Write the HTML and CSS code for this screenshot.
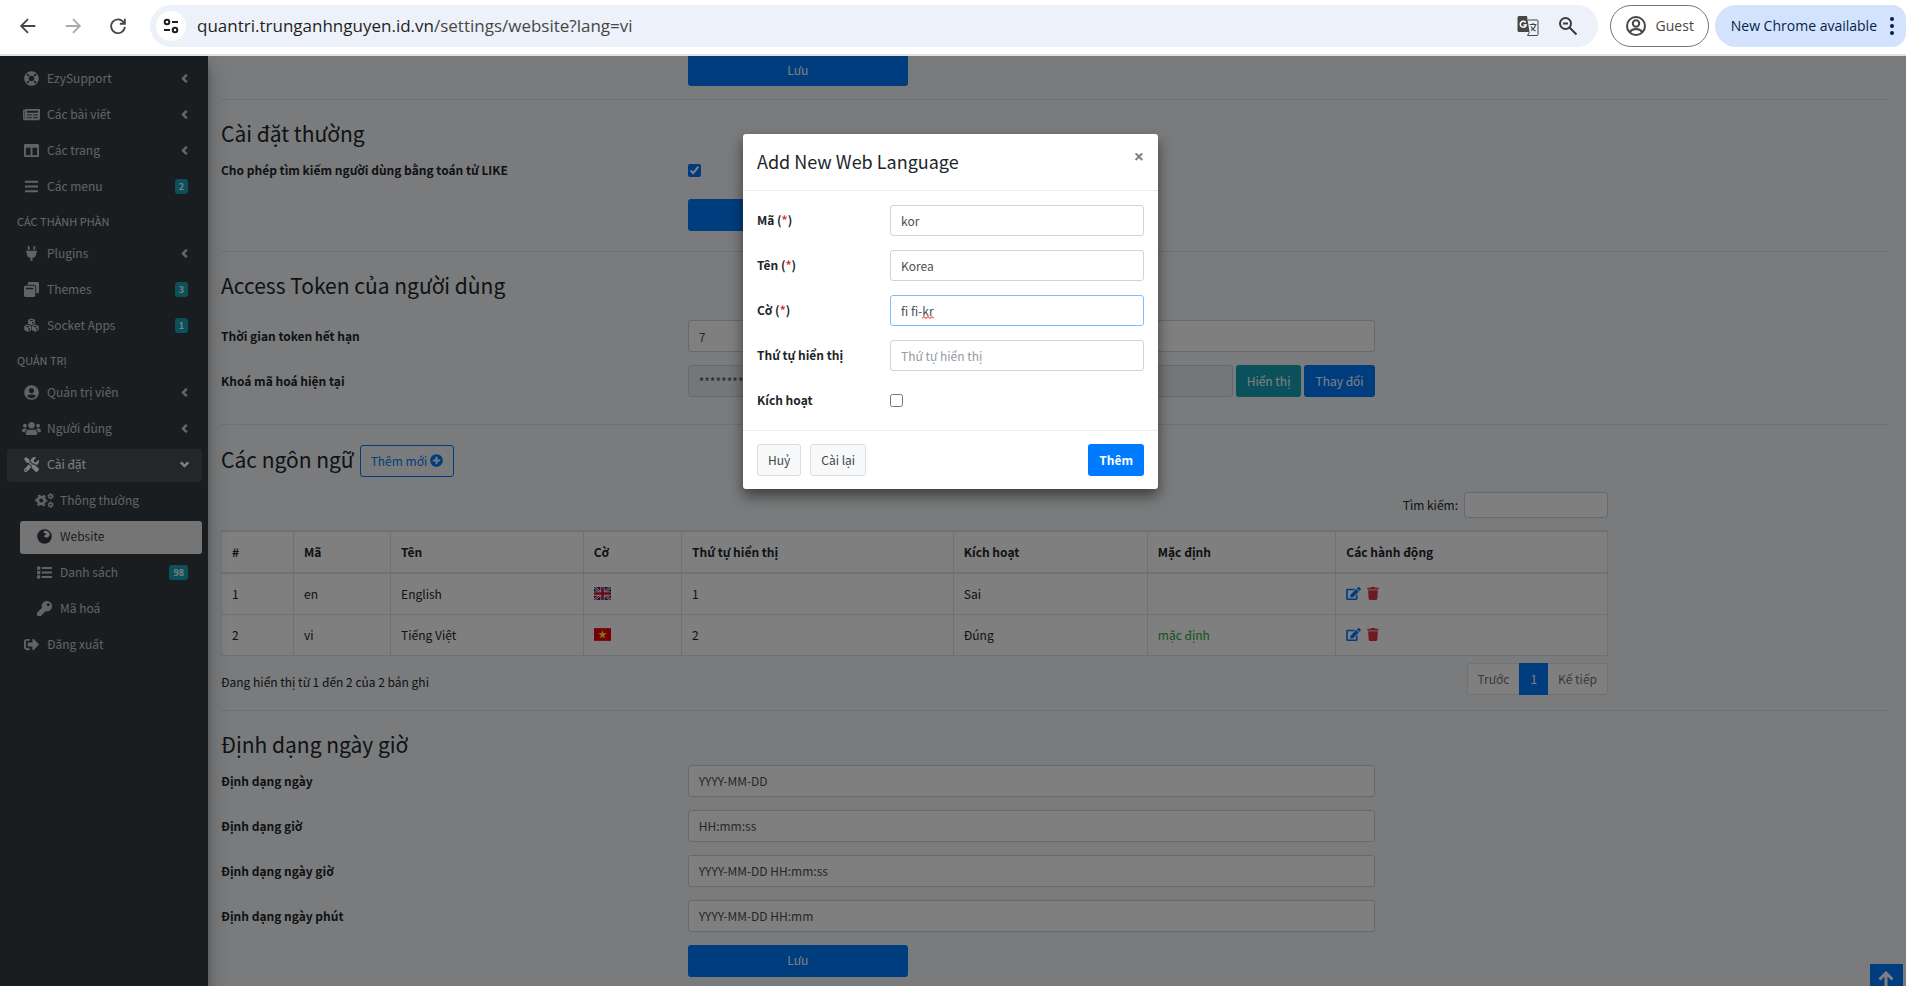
FILE: index.html
```html
<!DOCTYPE html>
<html lang="vi">
<head>
    <meta charset="UTF-8">
    <meta name="viewport" content="width=device-width, initial-scale=1.0">
    <title>Website settings</title>
    <link rel="stylesheet" href="styles.css">
</head>
<body>
    <svg class="sprite" aria-hidden="true">
        <symbol id="angle" viewBox="0 0 256 512"><path stroke="currentColor" stroke-width="30" d="M31.7 239l136-136c9.4-9.4 24.6-9.4 33.9 0l22.6 22.6c9.4 9.4 9.4 24.6 0 33.9L127.9 256l96.4 96.4c9.4 9.4 9.4 24.6 0 33.9L201.7 409c-9.4 9.4-24.6 9.4-33.9 0l-136-136c-9.5-9.4-9.5-24.6-.1-34z"/></symbol>
        <symbol id="life-ring" viewBox="0 0 512 512"><path d="M256 8C119.033 8 8 119.033 8 256s111.033 248 248 248 248-111.033 248-248S392.967 8 256 8zm173.696 119.559l-63.399 63.399c-10.987-18.559-26.67-34.252-45.255-45.255l63.399-63.399a218.396 218.396 0 0 1 45.255 45.255zM256 352c-53.019 0-96-42.981-96-96s42.981-96 96-96 96 42.981 96 96-42.981 96-96 96zM127.559 82.304l63.399 63.399c-18.559 10.987-34.252 26.67-45.255 45.255l-63.399-63.399a218.372 218.372 0 0 1 45.255-45.255zM82.304 384.441l63.399-63.399c10.987 18.559 26.67 34.252 45.255 45.255l-63.399 63.399a218.396 218.396 0 0 1-45.255-45.255zm302.137 45.255l-63.399-63.399c18.559-10.987 34.252-26.67 45.255-45.255l63.399 63.399a218.403 218.403 0 0 1-45.255 45.255z"/></symbol>
        <symbol id="newspaper" viewBox="0 0 576 512"><path d="M552 64H88c-13.255 0-24 10.745-24 24v8H24c-13.255 0-24 10.745-24 24v272c0 30.928 25.072 56 56 56h472c26.51 0 48-21.49 48-48V88c0-13.255-10.745-24-24-24zM56 400a8 8 0 0 1-8-8V144h16v248a8 8 0 0 1-8 8zm236-16H140c-6.627 0-12-5.373-12-12v-8c0-6.627 5.373-12 12-12h152c6.627 0 12 5.373 12 12v8c0 6.627-5.373 12-12 12zm208 0H348c-6.627 0-12-5.373-12-12v-8c0-6.627 5.373-12 12-12h152c6.627 0 12 5.373 12 12v8c0 6.627-5.373 12-12 12zm-208-96H140c-6.627 0-12-5.373-12-12v-8c0-6.627 5.373-12 12-12h152c6.627 0 12 5.373 12 12v8c0 6.627-5.373 12-12 12zm208 0H348c-6.627 0-12-5.373-12-12v-8c0-6.627 5.373-12 12-12h152c6.627 0 12 5.373 12 12v8c0 6.627-5.373 12-12 12zm0-96H140c-6.627 0-12-5.373-12-12v-40c0-6.627 5.373-12 12-12h360c6.627 0 12 5.373 12 12v40c0 6.627-5.373 12-12 12z"/></symbol>
        <symbol id="columns" viewBox="0 0 512 512"><path d="M464 32H48C21.49 32 0 53.49 0 80v352c0 26.51 21.49 48 48 48h416c26.51 0 48-21.49 48-48V80c0-26.51-21.49-48-48-48zM224 416H64V160h160v256zm224 0H288V160h160v256z"/></symbol>
        <symbol id="bars" viewBox="0 0 448 512"><rect y="60" width="448" height="72" rx="16"/><rect y="220" width="448" height="72" rx="16"/><rect y="380" width="448" height="72" rx="16"/></symbol>
        <symbol id="plug" viewBox="0 0 384 512"><path d="M320,32a32,32,0,0,0-64,0v96h64Zm48,128H16A16,16,0,0,0,0,176v32a16,16,0,0,0,16,16H32v32A160.07,160.07,0,0,0,160,412.8V512h64V412.8A160.07,160.07,0,0,0,352,256V224h16a16,16,0,0,0,16-16V176A16,16,0,0,0,368,160ZM128,32a32,32,0,0,0-64,0v96h64Z"/></symbol>
        <symbol id="restore" viewBox="0 0 512 512"><path d="M512 48v288c0 26.5-21.5 48-48 48h-48V176c0-44.1-35.9-80-80-80H128V48c0-26.5 21.5-48 48-48h288c26.5 0 48 21.5 48 48z"/><path fill-rule="evenodd" d="M384 176v288c0 26.5-21.5 48-48 48H48c-26.5 0-48-21.5-48-48V176c0-26.5 21.5-48 48-48h288c26.5 0 48 21.5 48 48zm-68 28c0-6.600-5.400-12-12-12H76c-6.600 0-12 5.400-12 12v40h252v-40z"/></symbol>
        <symbol id="cubes" viewBox="0 0 512 512"><path fill-rule="evenodd" d="M256 16l116 44v132l-116 50-116-50V60zM256 56l-70 26 70 28 70-28zM276 142v56l56-24v-56z"/><path fill-rule="evenodd" d="M128 226l118 48v134l-118 60-118-60V274zM128 266l-72 30 72 30 72-30zM148 360v62l58-30v-56z"/><path fill-rule="evenodd" d="M384 226l118 48v134l-118 60-118-60V274zM384 266l-72 30 72 30 72-30zM404 360v62l58-30v-56z"/></symbol>
        <symbol id="user-circle" viewBox="0 0 496 512"><path d="M248 8C111 8 0 119 0 256s111 248 248 248 248-111 248-248S385 8 248 8zm0 96c48.600 0 88 39.400 88 88s-39.400 88-88 88-88-39.400-88-88 39.400-88 88-88zm0 344c-58.700 0-111.300-26.600-146.500-68.200 18.800-35.400 55.600-59.800 98.500-59.800 2.400 0 4.800.4 7.100 1.100 13 4.200 26.600 6.900 40.900 6.900 14.300 0 28-2.700 40.900-6.900 2.300-.7 4.700-1.100 7.100-1.100 42.900 0 79.700 24.400 98.500 59.800C359.300 421.400 306.700 448 248 448z"/></symbol>
        <symbol id="users" viewBox="0 0 640 512"><path d="M96 224c35.300 0 64-28.700 64-64s-28.700-64-64-64-64 28.700-64 64 28.700 64 64 64zm448 0c35.300 0 64-28.700 64-64s-28.700-64-64-64-64 28.700-64 64 28.700 64 64 64zm32 32h-64c-17.600 0-33.500 7.100-45.100 18.600 40.300 22.100 68.900 62 75.100 109.400h66c17.700 0 32-14.300 32-32v-32c0-35.300-28.700-64-64-64zm-256 0c61.900 0 112-50.100 112-112S381.900 32 320 32 208 82.100 208 144s50.100 112 112 112zm76.800 32h-8.300c-20.800 10-43.900 16-68.500 16s-47.600-6-68.500-16h-8.300C179.600 288 128 339.600 128 403.200V432c0 26.500 21.500 48 48 48h288c26.500 0 48-21.500 48-48v-28.800c0-63.600-51.600-115.200-115.200-115.200zm-223.700-13.400C161.500 263.100 145.600 256 128 256H64c-35.300 0-64 28.700-64 64v32c0 17.700 14.300 32 32 32h65.900c6.300-47.400 34.900-87.300 75.200-109.400z"/></symbol>
        <symbol id="tools" viewBox="0 0 512 512"><path d="M501.1 395.7L384 278.6c-23.1-23.1-57.6-27.6-85.4-13.9L192 158.1V96L64 0 0 64l96 128h62.1l106.6 106.6c-13.6 27.8-9.2 62.3 13.900 85.400l117.100 117.100c14.600 14.600 38.200 14.600 52.700 0l52.700-52.700c14.500-14.600 14.500-38.200 0-52.700zM331.700 225c28.300 0 54.900 11 74.900 31l19.400 19.400c15.800-6.900 30.800-16.500 43.800-29.500 37.100-37.100 49.700-89.300 37.900-136.700-2.200-9-13.500-12.100-20.100-5.500l-74.400 74.400-67.900-11.300L334 98.900l74.400-74.400c6.600-6.600 3.400-17.900-5.700-20.200-47.400-11.700-99.600.9-136.600 37.900-28.500 28.500-41.900 66.100-41.200 103.600l82.100 82.100c8.100-1.900 16.500-2.900 24.700-2.900zm-103.900 82l-56.700-56.700L18.700 402.800c-25 25-25 65.500 0 90.500s65.500 25 90.500 0l123.600-123.600c-7.600-19.900-9.900-41.600-5-62.700zM64 472c-13.200 0-24-10.800-24-24 0-13.300 10.700-24 24-24s24 10.700 24 24c0 13.200-10.700 24-24 24z"/></symbol>
        <symbol id="cogs" viewBox="0 0 640 512"><g fill="none" stroke="currentColor"><circle cx="208" cy="256" r="116" stroke-width="92"/><circle cx="208" cy="256" r="180" stroke-width="56" stroke-dasharray="94 94" stroke-dashoffset="47"/><circle cx="530" cy="112" r="58" stroke-width="50"/><circle cx="530" cy="112" r="90" stroke-width="34" stroke-dasharray="47 47"/><circle cx="530" cy="400" r="58" stroke-width="50"/><circle cx="530" cy="400" r="90" stroke-width="34" stroke-dasharray="47 47"/></g></symbol>
        <symbol id="globe" viewBox="0 0 512 512"><path fill-rule="evenodd" d="M256 8a248 248 0 1 0 0 496 248 248 0 1 0 0-496zM250 60c96-18 176 42 182 122 4 70-52 118-116 112-54-4-82-40-80-78 44 12 74-12 72-42-2-32-44-46-86-36 0-34 10-62 28-78z"/></symbol>
        <symbol id="list" viewBox="0 0 512 512"><rect y="48" width="112" height="112" rx="16"/><rect y="200" width="112" height="112" rx="16"/><rect y="352" width="112" height="112" rx="16"/><rect x="160" y="72" width="352" height="64" rx="16"/><rect x="160" y="224" width="352" height="64" rx="16"/><rect x="160" y="376" width="352" height="64" rx="16"/></symbol>
        <symbol id="key" viewBox="0 0 512 512"><path d="M512 176.001C512 273.203 433.202 352 336 352c-11.220 0-22.190-1.062-32.827-3.069l-24.012 27.014A23.999 23.999 0 0 1 261.223 384H224v40c0 13.255-10.745 24-24 24h-40v40c0 13.255-10.745 24-24 24H24c-13.255 0-24-10.745-24-24v-78.059c0-6.365 2.529-12.470 7.029-16.971l161.802-161.802C163.108 213.814 160 195.271 160 176 160 78.798 238.797.001 335.999 0 433.488-.001 512 78.511 512 176.001zM336 128c0 26.510 21.490 48 48 48s48-21.490 48-48-21.490-48-48-48-48 21.490-48 48z"/></symbol>
        <symbol id="sign-out" viewBox="0 0 512 512"><path d="M497 273L329 441c-15 15-41 4.500-41-17v-96H152c-13.300 0-24-10.700-24-24v-96c0-13.300 10.700-24 24-24h136V88c0-21.400 25.900-32 41-17l168 168c9.300 9.400 9.300 24.600 0 34zM192 436v-40c0-6.600-5.400-12-12-12H96c-17.700 0-32-14.300-32-32V160c0-17.700 14.300-32 32-32h84c6.600 0 12-5.400 12-12V76c0-6.600-5.400-12-12-12H96c-53 0-96 43-96 96v192c0 53 43 96 96 96h84c6.600 0 12-5.400 12-12z"/></symbol>
        <symbol id="plus-circle" viewBox="0 0 512 512"><path d="M256 8C119 8 8 119 8 256s111 248 248 248 248-111 248-248S393 8 256 8zm144 276c0 6.600-5.400 12-12 12h-92v92c0 6.600-5.400 12-12 12h-56c-6.600 0-12-5.400-12-12v-92h-92c-6.600 0-12-5.400-12-12v-56c0-6.600 5.400-12 12-12h92v-92c0-6.600 5.400-12 12-12h56c6.600 0 12 5.400 12 12v92h92c6.600 0 12 5.400 12 12v56z"/></symbol>
        <symbol id="edit" viewBox="0 0 576 512"><path d="M402.600 83.200l90.200 90.200c3.800 3.800 3.800 10 0 13.800L274.400 405.600l-92.800 10.300c-12.400 1.400-22.900-9.100-21.500-21.500l10.300-92.800L388.800 83.200c3.800-3.800 10-3.800 13.800 0zm162-22.900l-48.800-48.800c-15.200-15.200-39.900-15.200-55.200 0l-35.400 35.400c-3.800 3.800-3.800 10 0 13.800l90.200 90.200c3.800 3.800 10 3.800 13.800 0l35.400-35.400c15.200-15.300 15.200-40 0-55.200zM384 346.200V448H64V128h229.800c3.200 0 6.200-1.300 8.500-3.500l40-40c7.600-7.600 2.200-20.500-8.500-20.500H48C21.500 64 0 85.500 0 112v352c0 26.500 21.500 48 48 48h352c26.500 0 48-21.500 48-48V306.200c0-10.700-12.900-16-20.500-8.500l-40 40c-2.200 2.300-3.500 5.300-3.500 8.500z"/></symbol>
        <symbol id="trash" viewBox="0 0 448 512"><path d="M432 32H312l-9.400-18.700A24 24 0 0 0 281.100 0H166.800a23.720 23.720 0 0 0-21.400 13.300L136 32H16A16 16 0 0 0 0 48v32a16 16 0 0 0 16 16h416a16 16 0 0 0 16-16V48a16 16 0 0 0-16-16zM53.200 467a48 48 0 0 0 47.900 45h245.800a48 48 0 0 0 47.900-45L416 128H32z"/></symbol>
    </svg>

    <header class="browser-bar">
        <button class="nav-btn" aria-label="Back"><svg viewBox="0 0 24 24"><path d="M20 12H5M12 4.500L4.500 12l7.500 7.500"/></svg></button>
        <button class="nav-btn disabled" aria-label="Forward"><svg viewBox="0 0 24 24"><path d="M4 12h15M12 4.500l7.500 7.500-7.500 7.500"/></svg></button>
        <button class="nav-btn" aria-label="Reload"><svg viewBox="0 0 24 24"><path d="M18.500 8.500A7.500 7.500 0 1 0 19.500 13M19.500 4v5.500H14"/></svg></button>
        <div class="address">
            <button class="site-info" aria-label="Site information"><svg viewBox="0 0 18 18"><circle cx="5" cy="5" r="2.300"/><path d="M10 5h6M2 13h6"/><circle cx="13" cy="13" r="2.300"/></svg></button>
            <span class="url">quantri.trunganhnguyen.id.vn<span>/settings/website?lang=vi</span></span>
            <button class="bar-icon" aria-label="Translate"><svg viewBox="0 0 22 22"><path d="M2 1h8l2.500 16H2a1.500 1.500 0 0 1-1.500-1.500v-13A1.500 1.500 0 0 1 2 1z" fill="#474747"/><path d="M11 5h9a1 1 0 0 1 1 1v13.500a1 1 0 0 1-1 1H10.500l2-3.500" stroke="#474747"/><path d="M8.700 7.500A3 3 0 1 0 9.200 10H6.500" stroke="#fff" stroke-width="1.500"/><path d="M12.500 9.500h7M16 8v1.500M18.500 9.500c-.5 3-2.500 5-4.500 6M14 11.500c1 2 2.500 3.500 4.500 4.500" stroke="#474747" stroke-width="1.200"/></svg></button>
            <button class="bar-icon" aria-label="Zoom"><svg viewBox="0 0 22 22" stroke="#3c3c3c" stroke-width="2"><circle cx="8.500" cy="8.500" r="5.500"/><path d="M6 8.500h5M12.500 12.500l7 7"/></svg></button>
        </div>
        <button class="guest"><svg viewBox="0 0 22 22"><circle cx="11" cy="11" r="9"/><circle cx="11" cy="8.500" r="3.200"/><path d="M4.500 17c1.800-2.200 4-3 6.500-3s4.700.8 6.500 3"/></svg>Guest</button>
        <button class="update">New Chrome available<svg viewBox="0 0 4 18"><circle cx="2" cy="2" r="2"/><circle cx="2" cy="9" r="2"/><circle cx="2" cy="16" r="2"/></svg></button>
    </header>

    <div class="viewport">
        <aside class="sidebar">
            <nav>
                <a href="#"><svg class="ico"><use href="#life-ring"/></svg>EzySupport<svg class="angle"><use href="#angle"/></svg></a>
                <a href="#"><svg class="ico"><use href="#newspaper"/></svg>Các bài viết<svg class="angle"><use href="#angle"/></svg></a>
                <a href="#"><svg class="ico"><use href="#columns"/></svg>Các trang<svg class="angle"><use href="#angle"/></svg></a>
                <a href="#"><svg class="ico"><use href="#bars"/></svg>Các menu<span class="badge">2</span></a>
                <h6>CÁC THÀNH PHẦN</h6>
                <a href="#"><svg class="ico"><use href="#plug"/></svg>Plugins<svg class="angle"><use href="#angle"/></svg></a>
                <a href="#"><svg class="ico"><use href="#restore"/></svg>Themes<span class="badge">3</span></a>
                <a href="#"><svg class="ico"><use href="#cubes"/></svg>Socket Apps<span class="badge">1</span></a>
                <h6>QUẢN TRỊ</h6>
                <a href="#"><svg class="ico"><use href="#user-circle"/></svg>Quản trị viên<svg class="angle"><use href="#angle"/></svg></a>
                <a href="#"><svg class="ico"><use href="#users"/></svg>Người dùng<svg class="angle"><use href="#angle"/></svg></a>
                <a href="#" class="open"><svg class="ico"><use href="#tools"/></svg>Cài đặt<svg class="angle down"><use href="#angle"/></svg></a>
                <a href="#" class="sub"><svg class="ico"><use href="#cogs"/></svg>Thông thường</a>
                <a href="#" class="sub active"><svg class="ico"><use href="#globe"/></svg>Website</a>
                <a href="#" class="sub"><svg class="ico"><use href="#list"/></svg>Danh sách<span class="badge">98</span></a>
                <a href="#" class="sub"><svg class="ico"><use href="#key"/></svg>Mã hoá</a>
                <a href="#"><svg class="ico"><use href="#sign-out"/></svg>Đăng xuất</a>
            </nav>
        </aside>

        <main class="content">
            <section class="first">
                <div class="form-row">
                    <button class="btn btn-primary save">Lưu</button>
                </div>
            </section>

            <section>
                <h3>Cài đặt thường</h3>
                <div class="form-row">
                    <label for="like">Cho phép tìm kiếm người dùng bằng toán tử LIKE</label>
                    <input type="checkbox" id="like" checked>
                </div>
                <div class="form-row">
                    <button class="btn btn-primary save">Lưu</button>
                </div>
            </section>

            <section class="token">
                <h3>Access Token của người dùng</h3>
                <div class="form-row">
                    <label for="expire">Thời gian token hết hạn</label>
                    <input type="text" id="expire" class="form-control field" value="7">
                </div>
                <div class="form-row">
                    <label for="secret">Khoá mã hoá hiện tại</label>
                    <div class="field secret">
                        <input type="text" id="secret" class="form-control" value="********************************" readonly>
                        <button class="btn btn-info">Hiển thị</button>
                        <button class="btn btn-primary">Thay đổi</button>
                    </div>
                </div>
            </section>

            <section class="languages">
                <div class="title-row">
                    <h3>Các ngôn ngữ</h3>
                    <button class="btn btn-outline">Thêm mới <svg><use href="#plus-circle"/></svg></button>
                </div>
                <div class="table-area">
                    <div class="search">
                        <label for="search">Tìm kiếm:</label>
                        <input type="search" id="search" class="form-control">
                    </div>
                    <table>
                        <colgroup>
                            <col class="c-num"><col class="c-code"><col class="c-name"><col class="c-flag"><col class="c-order"><col class="c-active"><col class="c-default"><col>
                        </colgroup>
                        <thead>
                            <tr><th>#</th><th>Mã</th><th>Tên</th><th>Cờ</th><th>Thứ tự hiển thị</th><th>Kích hoạt</th><th>Mặc định</th><th>Các hành động</th></tr>
                        </thead>
                        <tbody>
                            <tr>
                                <td>1</td><td>en</td><td>English</td>
                                <td><svg class="flag" viewBox="0 0 16 12"><path fill="#012169" d="M0 0h16v12H0z"/><path stroke="#fff" stroke-width="2.400" d="M0 0l16 12M16 0L0 12"/><path stroke="#c8102e" stroke-width="1" d="M0 0l16 12M16 0L0 12"/><path stroke="#fff" stroke-width="4" d="M8 0v12M0 6h16"/><path stroke="#c8102e" stroke-width="2.400" d="M8 0v12M0 6h16"/></svg></td>
                                <td>1</td><td>Sai</td><td></td>
                                <td class="actions"><a href="#" aria-label="Edit"><svg class="edit"><use href="#edit"/></svg></a><a href="#" aria-label="Delete"><svg class="trash"><use href="#trash"/></svg></a></td>
                            </tr>
                            <tr>
                                <td>2</td><td>vi</td><td>Tiếng Việt</td>
                                <td><svg class="flag" viewBox="0 0 16 12"><path fill="#ec0015" d="M0 0h16v12H0z"/><path fill="#ff0" d="M8 2l.9 2.900H12L9.500 6.700l1 3L8 7.900l-2.500 1.800 1-3L4 4.900h3.100z"/></svg></td>
                                <td>2</td><td>Đúng</td><td class="default">mặc định</td>
                                <td class="actions"><a href="#" aria-label="Edit"><svg class="edit"><use href="#edit"/></svg></a><a href="#" aria-label="Delete"><svg class="trash"><use href="#trash"/></svg></a></td>
                            </tr>
                        </tbody>
                    </table>
                    <div class="table-footer">
                        <span>Đang hiển thị từ 1 đến 2 của 2 bản ghi</span>
                        <div class="pagination"><a href="#">Trước</a><a href="#" class="current">1</a><a href="#">Kế tiếp</a></div>
                    </div>
                </div>
            </section>

            <section>
                <h3>Định dạng ngày giờ</h3>
                <div class="form-row">
                    <label for="date">Định dạng ngày</label>
                    <input type="text" id="date" class="form-control field" value="YYYY-MM-DD">
                </div>
                <div class="form-row">
                    <label for="time">Định dạng giờ</label>
                    <input type="text" id="time" class="form-control field" value="HH:mm:ss">
                </div>
                <div class="form-row">
                    <label for="datetime">Định dạng ngày giờ</label>
                    <input type="text" id="datetime" class="form-control field" value="YYYY-MM-DD HH:mm:ss">
                </div>
                <div class="form-row">
                    <label for="minute">Định dạng ngày phút</label>
                    <input type="text" id="minute" class="form-control field" value="YYYY-MM-DD HH:mm">
                </div>
                <div class="form-row">
                    <button class="btn btn-primary save">Lưu</button>
                </div>
            </section>
        </main>

        <a href="#" class="back-to-top" aria-label="Top"><svg viewBox="0 0 16 18"><path d="M8 17V2M1.500 8.500L8 2l6.500 6.500"/></svg></a>

        <div class="backdrop">
            <form class="modal" role="dialog" aria-labelledby="modal-title">
                <div class="modal-header">
                    <h4 id="modal-title">Add New Web Language</h4>
                    <button type="button" class="close" aria-label="Close">×</button>
                </div>
                <div class="modal-body">
                    <label for="m-code">Mã (<i>*</i>)</label>
                    <input type="text" id="m-code" class="form-control" value="kor">
                    <label for="m-name">Tên (<i>*</i>)</label>
                    <input type="text" id="m-name" class="form-control" value="Korea">
                    <label for="m-flag">Cờ (<i>*</i>)</label>
                    <div class="spell">
                        <input type="text" id="m-flag" class="form-control focused" value="fi fi-kr">
                        <svg viewBox="0 0 12 3"><path d="M0 2.500l2-2 2 2 2-2 2 2 2-2 2 2"/></svg>
                    </div>
                    <label for="m-order">Thứ tự hiển thị</label>
                    <input type="text" id="m-order" class="form-control" placeholder="Thứ tự hiển thị">
                    <label for="m-active">Kích hoạt</label>
                    <input type="checkbox" id="m-active">
                </div>
                <div class="modal-footer">
                    <button type="button" class="btn btn-light">Huỷ</button>
                    <button type="reset" class="btn btn-light">Cài lại</button>
                    <button type="button" class="btn btn-primary add">Thêm</button>
                </div>
            </form>
        </div>
    </div>
</body>
</html>
```
FILE: styles.css
```css
* {
    box-sizing: border-box;
}
body {
    margin: 0;
    height: 100vh;
    overflow: hidden;
    display: flex;
    flex-direction: column;
    font-family: "Noto Sans CJK SC", "Noto Sans", sans-serif;
    font-size: 12px;
    line-height: 20px;
    color: #212529;
}
button, input {
    font: inherit;
    color: inherit;
}
button {
    cursor: pointer;
}
a {
    text-decoration: none;
}
svg {
    fill: currentColor;
    flex-shrink: 0;
}
h3, h4, h6 {
    margin: 0;
    font-weight: normal;
}
.sprite {
    position: absolute;
    width: 0;
    height: 0;
}

/* browser toolbar */
.browser-bar {
    display: flex;
    align-items: center;
    height: 56px;
    flex-shrink: 0;
    padding: 0 0 3px 5px;
    background-color: #fff;
    border-bottom: 2px solid #e1e3e1;
    font-family: "Open Sans", sans-serif;
    font-size: 14px;
    color: #474747;
}
.browser-bar button {
    border: none;
    background: none;
    padding: 0;
    display: flex;
    align-items: center;
    justify-content: center;
}
.nav-btn {
    width: 45px;
    height: 42px;
}
.nav-btn svg {
    width: 22px;
    height: 22px;
    fill: none;
    stroke: #474747;
    stroke-width: 2;
}
.nav-btn.disabled svg {
    stroke: #aaa;
}
.address {
    flex: 1;
    display: flex;
    align-items: center;
    height: 42px;
    margin: 0 12px 0 10px;
    padding: 0 10px 0 6px;
    border-radius: 21px;
    background-color: #ecf1fa;
}
.browser-bar .site-info {
    width: 30px;
    height: 30px;
    border-radius: 50%;
    background-color: #fff;
}
.site-info svg {
    width: 18px;
    height: 18px;
    fill: none;
    stroke: #1f1f1f;
    stroke-width: 2;
}
.url {
    flex: 1;
    margin-left: 11px;
    font-size: 17px;
    color: #1f1f1f;
}
.url span {
    color: #474747;
}
.bar-icon {
    width: 40px;
    height: 30px;
}
.bar-icon svg {
    width: 22px;
    height: 22px;
    fill: none;
}
.browser-bar .guest {
    width: 99px;
    height: 42px;
    gap: 9px;
    border: 1px solid #747775;
    border-radius: 21px;
    margin-right: 6px;
}
.guest svg {
    width: 22px;
    height: 22px;
    fill: none;
    stroke: #474747;
    stroke-width: 2;
}
.browser-bar .update {
    height: 42px;
    gap: 13px;
    padding: 0 12px 0 16px;
    border-radius: 21px 14px 14px 21px;
    background-color: #d3e3fd;
    color: #041e49;
}
.update svg {
    width: 4px;
    height: 18px;
}

/* page */
.viewport {
    position: relative;
    flex: 1;
    min-height: 0;
    display: flex;
    overflow: hidden;
    padding-right: 5px;
    background-color: #f4f6f9;
}
.sidebar {
    width: 208px;
    flex-shrink: 0;
    padding: 7px 6px 0 7px;
    background-color: #343a40;
    box-shadow: 0 12px 23px rgba(0, 0, 0, 0.25), 0 8px 8px rgba(0, 0, 0, 0.22);
    z-index: 1;
}
.sidebar a {
    display: flex;
    align-items: center;
    height: 33px;
    margin-bottom: 3px;
    padding: 0 14px 3px 13px;
    border-radius: 3px;
    color: #c2c7d0;
}
.sidebar h6 {
    height: 31px;
    padding: 4px 10px;
    font-size: 11px;
    line-height: 20px;
    color: #d0d4db;
}
.ico {
    width: 23px;
    height: 15px;
    margin-right: 4px;
}
.angle {
    width: 7px;
    height: 13px;
    margin-left: auto;
}
.angle.down {
    transform: rotate(-90deg);
}
.badge {
    margin-left: auto;
    padding: 0 4px;
    border-radius: 3px;
    background-color: #17a2b8;
    color: #fff;
    font-size: 9px;
    font-weight: bold;
    line-height: 15px;
}
.sidebar .open {
    background-color: rgba(255, 255, 255, 0.1);
    color: #fff;
}
.sidebar .sub {
    margin-left: 13px;
}
.sidebar .active {
    background-color: rgba(255, 255, 255, 0.9);
    color: #343a40;
}
.content {
    flex: 1;
    min-width: 0;
    margin-top: -2px;
    padding: 0 13px;
}
section {
    padding: 20px 0;
    border-top: 1px solid #dfe1e4;
}
section.first {
    border: none;
    padding: 0 0 13px;
}
.token {
    padding-bottom: 27px;
}
h3 {
    margin-bottom: 8px;
    font-size: 21px;
    line-height: 26px;
}
.token h3 {
    margin-bottom: 22px;
}
.form-row {
    display: grid;
    grid-template-columns: repeat(12, 1fr);
    column-gap: 13px;
    align-items: center;
    width: calc((100% + 13px) * 10 / 12 - 13px);
    min-height: 32px;
}
.form-row + .form-row {
    margin-top: 13px;
}
.form-row label {
    grid-column: 1 / span 4;
    font-weight: bold;
}
.field {
    grid-column: 5 / span 6;
}
.save {
    grid-column: 5 / span 2;
}
input[type="checkbox"] {
    width: 13px;
    height: 13px;
    margin: 0;
}
.form-control {
    width: 100%;
    height: 32px;
    padding: 0 10px;
    border: 1px solid #ced4da;
    border-radius: 3px;
    background-color: #fff;
    color: #495057;
    outline: none;
}
.form-control::placeholder {
    color: #939ba2;
}
.form-control[readonly] {
    background-color: #e9ecef;
}
.secret {
    display: flex;
    gap: 3px;
}
.secret .form-control {
    flex: 1;
    width: auto;
    min-width: 0;
}
.btn {
    height: 32px;
    padding: 0 10px 1px;
    border: 1px solid transparent;
    border-radius: 3px;
    white-space: nowrap;
}
.btn-primary {
    background-color: #007bff;
    color: #fff;
}
.btn-info {
    background-color: #17a2b8;
    color: #fff;
}
.btn-light {
    background-color: #f8f9fa;
    border-color: #ddd;
    color: #444;
}
.btn-outline {
    display: flex;
    align-items: center;
    gap: 3px;
    background: none;
    border-color: #007bff;
    color: #007bff;
}
.btn-outline svg {
    width: 13px;
    height: 13px;
}

/* languages table */
.languages {
    padding-bottom: 15px;
}
.title-row {
    display: flex;
    align-items: center;
    gap: 6px;
}
.title-row h3 {
    margin: 0 0 4px;
}
.table-area {
    width: calc((100% + 13px) * 10 / 12 - 13px);
}
.search {
    display: flex;
    justify-content: flex-end;
    align-items: center;
    gap: 6px;
    margin: 15px 0 12px;
}
.search .form-control {
    width: 144px;
    height: 26px;
}
table {
    width: 100%;
    table-layout: fixed;
    border-collapse: collapse;
    background-color: #fff;
}
th, td {
    height: 41px;
    padding: 0 10px;
    border: 1px solid #dee2e6;
    text-align: left;
}
th {
    height: 42px;
    border-top-width: 2px;
    border-bottom-width: 2px;
}
.c-num { width: 5.2%; }
.c-code { width: 7%; }
.c-name { width: 13.9%; }
.c-flag { width: 7.1%; }
.c-order { width: 19.6%; }
.c-active { width: 14%; }
.c-default { width: 13.6%; }
td svg {
    display: block;
}
.flag {
    width: 17px;
    height: 13px;
}
.default {
    color: #28a745;
}
.actions a {
    display: inline-block;
    vertical-align: -1px;
    margin-right: 6px;
    color: #007bff;
}
.actions a + a {
    color: #dc3545;
}
.edit {
    width: 15px;
    height: 13px;
}
.trash {
    width: 12px;
    height: 13px;
}
.table-footer {
    display: flex;
    justify-content: space-between;
    align-items: center;
    margin-top: 7px;
}
.table-footer span {
    padding-top: 6px;
}
.pagination {
    display: flex;
    border: 1px solid #dee2e6;
    border-radius: 3px;
    background-color: #fff;
}
.pagination a {
    padding: 0 10px;
    line-height: 30px;
    color: #6c757d;
}
.pagination .current {
    margin: -1px 0;
    padding: 0 11px;
    line-height: 32px;
    background-color: #007bff;
    color: #fff;
}
.back-to-top {
    position: absolute;
    right: 3px;
    bottom: -11px;
    width: 33px;
    height: 33px;
    padding: 7px 8px;
    background-color: #007bff;
    color: #fff;
}
.back-to-top svg {
    width: 16px;
    height: 18px;
    fill: none;
    stroke: currentColor;
    stroke-width: 3;
}

/* modal */
.backdrop {
    position: absolute;
    inset: 0;
    z-index: 2;
    padding: 78px 5px 0 0;
    background-color: rgba(0, 0, 0, 0.5);
}
.modal {
    width: 415px;
    margin: 0 auto;
    border-radius: 3px;
    background-color: #fff;
    box-shadow: 0 7px 14px rgba(0, 0, 0, 0.5);
}
.modal-header {
    display: flex;
    justify-content: space-between;
    align-items: center;
    padding: 12px 14px 14px;
    border-bottom: 1px solid #e9ecef;
}
.modal-header h4 {
    font-size: 18px;
    line-height: 30px;
}
.close {
    align-self: flex-start;
    padding: 0;
    border: none;
    background: none;
    font-family: "Open Sans", sans-serif;
    font-size: 18px;
    font-weight: bold;
    line-height: 20px;
    color: #7f7f7f;
}
.modal-body {
    display: grid;
    grid-template-columns: 120px 1fr;
    gap: 14px 13px;
    align-items: center;
    padding: 14px;
    border-bottom: 1px solid #e9ecef;
}
.modal-body .form-control {
    height: 31px;
}
.modal-body label {
    padding-bottom: 2px;
    line-height: 29px;
    font-weight: bold;
}
.modal-body i {
    font-style: normal;
    color: #dc3545;
}
.modal-body .focused {
    border-color: #80bdff;
}
.spell {
    position: relative;
    display: flex;
}
.spell svg {
    position: absolute;
    left: 32px;
    top: 21px;
    width: 12px;
    height: 3px;
    fill: none;
    stroke: #f00;
}
.modal-footer {
    display: flex;
    gap: 9px;
    padding: 13px 14px;
}
.modal-footer .add {
    margin-left: auto;
    font-weight: bold;
}
```
